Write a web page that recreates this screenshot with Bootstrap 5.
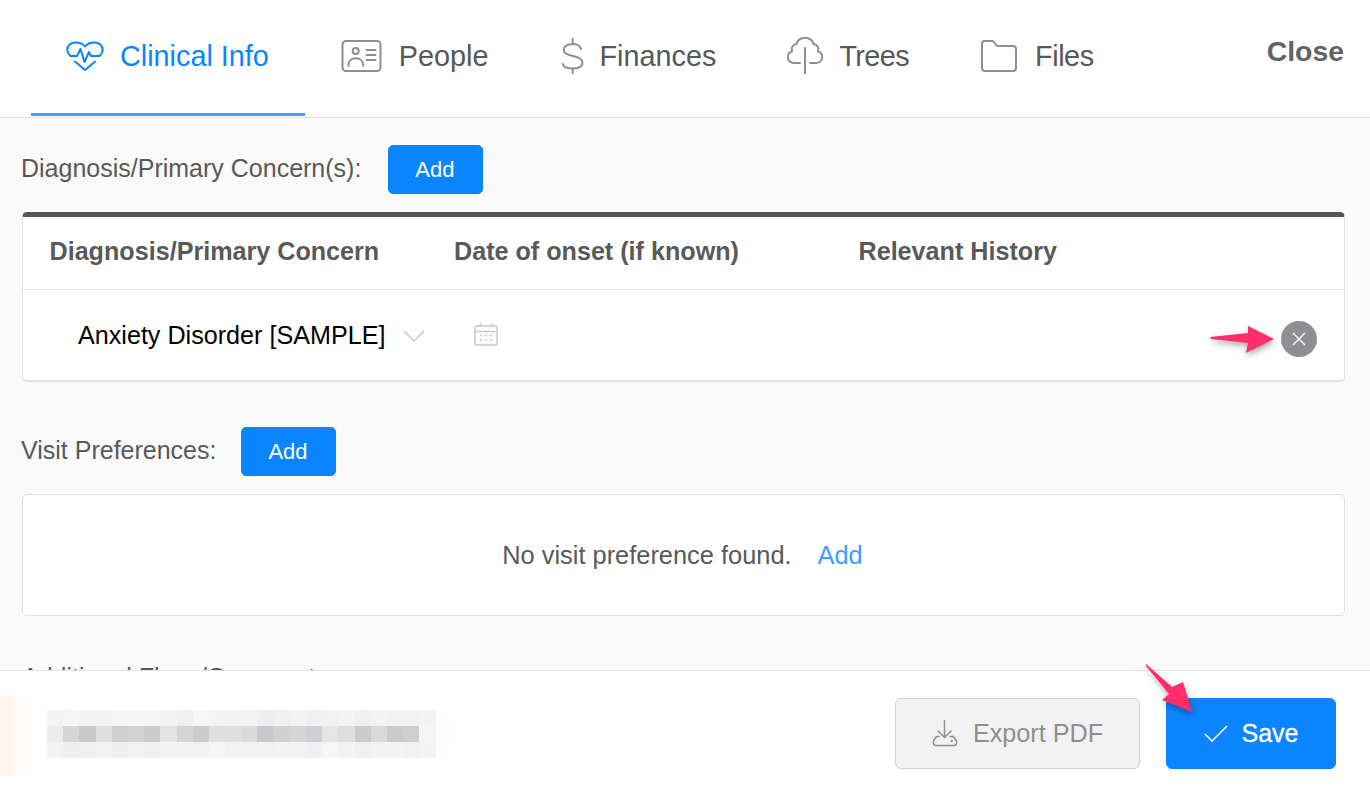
<!DOCTYPE html>
<html>

<head>
  <link href="https://cdn.jsdelivr.net/npm/bootstrap@5.3.2/dist/css/bootstrap.min.css" rel="stylesheet" type="text/css" />
  <script src="https://cdn.jsdelivr.net/npm/bootstrap@5.3.2/dist/js/bootstrap.bundle.min.js"></script>

  <style>
    html, body {
      height: 100%;
      overflow: hidden;
    }

    body {
      font-family: "Liberation Sans", Arial, sans-serif;
      color: #595959;
      background: #fff;
    }

    #screen {
      position: relative;
      height: 790px;
    }

    /* top tabs */
    #topbar {
      height: 118px;
      border-bottom: 1px solid #e3e3e3;
      padding-left: 31px;
      padding-right: 26px;
    }

    .tab-item {
      height: 116px;
      padding: 0 36px 5px 36px;
      font-size: 28.8px;
      color: #58585a;
      text-decoration: none;
      gap: 17px;
    }

    .tab-item span {
      padding-top: 2px;
    }

    .tab-item.is-active {
      color: #0a84ff;
      border-bottom: 3px solid #409cff;
      padding-bottom: 2px;
      padding-left: 35px;
      gap: 16px;
    }

    .tab-item.is-money {
      gap: 16px;
    }

    .tab-item.is-tree {
      padding-left: 35px;
      gap: 16px;
      letter-spacing: -.6px;
    }

    .tab-item.is-folder {
      gap: 18px;
      letter-spacing: -.4px;
    }

    .tab-close {
      font-size: 28.4px;
      font-weight: 700;
      color: #636366;
      margin-top: 33px;
      line-height: 37px;
    }

    /* middle part, cut off by the footer */
    #content {
      height: 552px;
      background: #fafafa;
      overflow: hidden;
      padding: 27px 25px 0 22px;
    }

    .field-head {
      height: 49px;
      gap: 27px;
      font-size: 25px;
    }

    .field-head.is-second {
      margin-top: 45px;
      gap: 25px;
    }

    .field-label {
      margin: -2px 0 0 -1px;
    }

    .add-btn {
      width: 95px;
      height: 49px;
      padding: 0 2px 0 0;
      font-size: 22px;
      background: #0a84ff;
      border-color: #0a84ff;
      border-radius: 5px;
    }

    .concern-box {
      margin-top: 18px;
      background: #fff;
      border: 1px solid #e3e3e3;
      border-top: 5px solid #555;
      border-bottom: 2px solid #e0e0e0;
      border-radius: 5px;
      height: 170px;
    }

    .concern-head {
      height: 73px;
      border-bottom: 1px solid #e3e3e3;
      font-size: 25.15px;
      font-weight: 700;
      padding-left: 26.5px;
      padding-bottom: 3px;
    }

    .concern-head div {
      width: 404.5px;
    }

    .concern-row {
      height: 90px;
      padding-left: 55px;
      padding-right: 27px;
      padding-top: 1px;
      font-size: 25.15px;
      color: #000;
    }

    .caret-icon {
      margin-left: 18px;
    }

    .cal-icon {
      margin-left: 49px;
      margin-bottom: 2px;
    }

    .remove-btn {
      width: 36px;
      height: 36px;
      padding: 0;
      border: 0;
      background: #8e8e93;
      margin-top: 6px;
    }

    .empty-box {
      margin-top: 18px;
      height: 122px;
      background: #fff;
      border: 1px solid #e0e0e0;
      border-radius: 5px;
      font-size: 25.4px;
      gap: 26px;
      padding-right: 2px;
    }

    .empty-box a {
      color: #409cff;
      text-decoration: none;
    }

    .cut-label {
      margin-top: 43px;
      font-size: 25px;
    }

    /* footer */
    #footbar {
      height: 120px;
      border-top: 1px solid #e3e3e3;
      background: #fff;
      padding: 27px 34px 0 0;
    }

    .export-btn {
      width: 245px;
      height: 71px;
      background: #f2f2f2;
      border: 1px solid #d1d1d6;
      color: #8e8e93;
      font-size: 25.2px;
      border-radius: 6px;
      gap: 14px;
      padding: 0;
    }

    .save-btn {
      width: 170px;
      height: 71px;
      margin-left: 26px;
      background: #0a84ff;
      border-color: #0a84ff;
      font-size: 25px;
      font-weight: 500;
      border-radius: 6px;
      gap: 14px;
      padding: 0;
      -webkit-text-stroke: 0.3px #fff;
    }

    /* blurred out name */
    .blur-strip {
      position: absolute;
      left: 0;
      top: 695px;
      width: 460px;
      height: 81px;
      background: linear-gradient(90deg, #fef6ec 0, #fef6ec 14px, #fffcf9 15px, #fffcf9 30px, #fff 32px);
    }

    .blur-rows {
      position: absolute;
      left: 47px;
      top: 15px;
      filter: blur(0.6px);
      box-shadow: 14px 0 14px #fcfcfd;
    }

    .blur-rows > div {
      height: 16px;
    }

    .blur-rows span {
      width: 16.2px;
      flex: none;
    }

    .note-arrow {
      position: absolute;
      overflow: visible;
      filter: drop-shadow(1px 3px 3px rgba(0, 0, 0, .35));
    }
  </style>
</head>

<body>
  <div id="screen" class="d-flex flex-column">
    <header id="topbar" class="d-flex justify-content-between flex-shrink-0">
      <nav class="d-flex">
        <a href="#" class="tab-item is-active d-flex align-items-center">
          <svg width="38" height="32" viewBox="0 0 38 32" fill="none" stroke="#0a84ff" stroke-width="2" stroke-linejoin="round" stroke-linecap="round">
            <path d="M4.500 16C2.500 14 1.300 12 1.300 10C1.300 5.500 5 2.500 9.500 2.500C13.500 2.500 17 4 19 6.500C21 4 24.500 2.500 28.500 2.500C33 2.500 36.700 5.500 36.700 10C36.700 12 35.500 14 33.500 16H25L23 12L18.500 22L14.500 9L11 16Z" />
            <path d="M9 21.500L19 30L29 21.500" />
          </svg>
          <span>Clinical Info</span>
        </a>
        <a href="#" class="tab-item d-flex align-items-center">
          <svg width="41" height="32" viewBox="0 0 41 32" fill="none" stroke="#8e8e93" stroke-width="2" stroke-linecap="round">
            <rect x="1.500" y="1" width="38" height="30" rx="3.500" />
            <circle cx="14.700" cy="11" r="3" />
            <path d="M7.300 25.700C7.300 21 10.500 18.300 14.700 18.300C19 18.300 22.300 21 22.300 25.700" />
            <path d="M25.500 10H34.500M25.500 15H34.500M25.500 20H34.500" />
          </svg>
          <span>People</span>
        </a>
        <a href="#" class="tab-item is-money d-flex align-items-center">
          <svg width="23" height="36" viewBox="0 0 23 36" fill="none" stroke="#8e8e93" stroke-width="2" stroke-linecap="round">
            <path d="M11.700 .5V6M11.700 30.500V36" />
            <path d="M20 11C19 8 16 6 11.700 6C6.500 6 2.700 8.500 2.700 12C2.700 15.500 6.500 17 11.700 18C17 19 21.500 21 21.500 24.700C21.500 28.500 17 30.500 11.700 30.500C6.500 30.500 2.500 29 1.700 26" />
          </svg>
          <span>Finances</span>
        </a>
        <a href="#" class="tab-item is-tree d-flex align-items-center">
          <svg width="36" height="37" viewBox="0 0 36 37" fill="none" stroke="#8e8e93" stroke-width="2" stroke-linecap="round" stroke-linejoin="round">
            <path d="M18 36.500V11" />
            <path d="M13 26H7C3.500 26 .8 23.500 .8 20C.8 17 3 15 5 14.500C4 10 6 7.500 9.500 7C10 3.500 13.500 .8 18 .8C22.500 .8 26 3.500 26.500 7C30 7.500 32 10 31 14.500C33 15 35.200 17 35.200 20C35.200 23.500 32.500 26 29 26H23" />
          </svg>
          <span>Trees</span>
        </a>
        <a href="#" class="tab-item is-folder d-flex align-items-center">
          <svg width="36" height="32" viewBox="0 0 36 32" fill="none" stroke="#8e8e93" stroke-width="2" stroke-linejoin="round">
            <path d="M1 4C1 2.500 2 1 3.500 1H12L16 6H32C34 6 35 7 35 9V28C35 30 34 31 32 31H4C2 31 1 30 1 28Z" />
          </svg>
          <span>Files</span>
        </a>
      </nav>
      <div class="tab-close">Close</div>
    </header>

    <main id="content" class="flex-shrink-0">
      <div class="field-head d-flex align-items-center">
        <span class="field-label">Diagnosis/Primary Concern(s):</span>
        <button type="button" class="btn btn-primary add-btn">Add</button>
      </div>

      <div class="concern-box">
        <div class="concern-head d-flex align-items-center">
          <div>Diagnosis/Primary Concern</div>
          <div>Date of onset (if known)</div>
          <div>Relevant History</div>
        </div>
        <div class="concern-row d-flex align-items-center">
          <span>Anxiety Disorder [SAMPLE]</span>
          <svg class="caret-icon" width="22" height="12" viewBox="0 0 22 12" fill="none" stroke="#c7c7cc" stroke-width="1.500">
            <path d="M1 1L11 11L21 1" />
          </svg>
          <svg class="cal-icon" width="24" height="23" viewBox="0 0 24 23" fill="none" stroke="#c7c9d1" stroke-width="1.500">
            <rect x="1" y="3" width="22" height="19" rx="1.500" />
            <path d="M1 8.500H23M6.500 0V4M17.500 0V4" />
            <path d="M6 12.500H8M11 12.500H13M16 12.500H18M6 17H8M11 17H13M16 17H18" />
          </svg>
          <button type="button" class="remove-btn rounded-circle d-flex align-items-center justify-content-center ms-auto" aria-label="Remove">
            <svg width="14" height="14" viewBox="0 0 14 14" stroke="#fff" stroke-width="1.300">
              <path d="M1 1L13 13M13 1L1 13" />
            </svg>
          </button>
        </div>
      </div>

      <div class="field-head is-second d-flex align-items-center">
        <span class="field-label">Visit Preferences:</span>
        <button type="button" class="btn btn-primary add-btn">Add</button>
      </div>

      <div class="empty-box d-flex align-items-center justify-content-center">
        <span>No visit preference found.</span>
        <a href="#">Add</a>
      </div>

      <div class="cut-label">Additional Flags/Comments:</div>
    </main>

    <footer id="footbar" class="d-flex justify-content-end flex-shrink-0">
      <button type="button" class="btn export-btn d-flex align-items-center justify-content-center">
        <svg width="27" height="28" viewBox="0 0 27 28" fill="none" stroke="#8e8e93" stroke-width="1.500" stroke-linecap="round" stroke-linejoin="round">
          <path d="M12.500 .5V17M6 11L12.500 17.500L19 11" />
          <path d="M7 16.500H4.500L1.500 21V23C1.500 24.500 2.500 25.500 4 25.500H22C23.500 25.500 24.500 24.500 24.500 23V21L21.500 16.500H18" />
          <circle cx="19.700" cy="21" r=".5" />
        </svg>
        <span>Export PDF</span>
      </button>
      <button type="button" class="btn btn-primary save-btn d-flex align-items-center justify-content-center">
        <svg width="24" height="17" viewBox="0 0 24 17" fill="none" stroke="#fff" stroke-width="1.500">
          <path d="M1 9L8 16L23 1" />
        </svg>
        <span>Save</span>
      </button>
    </footer>

    <div class="blur-strip">
      <div class="blur-rows" id="blurRows"></div>
    </div>

    <svg class="note-arrow" style="left:1210px;top:325px" width="66" height="30" viewBox="0 0 66 30">
      <path d="M0 12L38 8L38 1L64 14L36 28L38 18L1 14Z" fill="#ff2d6b" />
    </svg>
    <svg class="note-arrow" style="left:1145px;top:662px" width="50" height="52" viewBox="0 0 50 52">
      <path d="M1 2L27 25L38 20L47 50L17 38L24 32L1 4Z" fill="#ff2d6b" />
    </svg>
  </div>

  <script>
    const blurRows = document.querySelector("#blurRows")
    const shades = [
      ["#f3f3f3", "#f5f5f5", "#f4f4f4", "#f3f3f3", "#f5f5f5", "#f5f5f5", "#f5f5f5", "#f3f3f3", "#f0f0f0", "#f6f6f6", "#f4f4f4", "#f4f4f4", "#f2f3f3", "#eeeef0", "#f0f0f0", "#f2f2f2", "#eff0f1", "#f1f1f1", "#f3f3f3", "#f0f0f0", "#f3f3f3", "#f1f1f1", "#f1f1f1", "#f3f3f3"],
      ["#ebebeb", "#d6d6d8", "#c9c9cb", "#dfdfe0", "#cfcfd1", "#d3d3d5", "#cdcdcf", "#e3e3e3", "#d5d5d7", "#cdcdd0", "#dfdfe0", "#e0e0e1", "#dbdbdd", "#c9c9cc", "#d1d1d3", "#d6d6d8", "#cfcfd1", "#e6e6e7", "#dedee0", "#cbcbcd", "#d9d9da", "#cbcbcd", "#cfcfd1", "#f5f5f7"],
      ["#f3f3f3", "#efefef", "#f0f0f0", "#f4f4f4", "#efefef", "#f1f1f1", "#f0f0f0", "#f4f4f4", "#f3f3f3", "#f1f1f1", "#f5f5f5", "#f2f2f2", "#f1f1f1", "#f1f1f1", "#f3f3f3", "#f2f2f2", "#f0f0f2", "#f6f6f6", "#f3f3f3", "#eff0f2", "#f2f3f4", "#f2f3f4", "#f1f1f1", "#f4f4f4"]
    ]

    shades.forEach(function (row) {
      const line = document.createElement("div")
      line.className = "d-flex"
      row.forEach(function (shade) {
        const cell = document.createElement("span")
        cell.style.background = shade
        line.appendChild(cell)
      })
      blurRows.appendChild(line)
    })
  </script>
</body>

</html>
